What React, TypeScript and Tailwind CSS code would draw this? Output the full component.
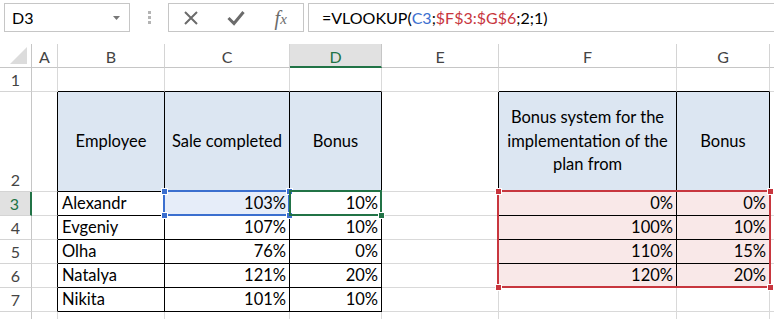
import React from "react";

type Cell = { text?: React.ReactNode; align?: "left" | "right" | "center" };

const colLetters = ["", "A", "B", "C", "D", "E", "F", "G", ""];

const data: Record<number, Record<number, Cell>> = {
  2: {
    2: { text: "Employee", align: "center" },
    3: { text: "Sale completed", align: "center" },
    4: { text: "Bonus", align: "center" },
    6: {
      text: (
        <>
          Bonus system for the
          <br />
          implementation of the
          <br />
          plan from
        </>
      ),
      align: "center",
    },
    7: { text: "Bonus", align: "center" },
  },
  3: { 2: { text: "Alexandr" }, 3: { text: "103%", align: "right" }, 4: { text: "10%", align: "right" }, 6: { text: "0%", align: "right" }, 7: { text: "0%", align: "right" } },
  4: { 2: { text: "Evgeniy" }, 3: { text: "107%", align: "right" }, 4: { text: "10%", align: "right" }, 6: { text: "100%", align: "right" }, 7: { text: "10%", align: "right" } },
  5: { 2: { text: "Olha" }, 3: { text: "76%", align: "right" }, 4: { text: "0%", align: "right" }, 6: { text: "110%", align: "right" }, 7: { text: "15%", align: "right" } },
  6: { 2: { text: "Natalya" }, 3: { text: "121%", align: "right" }, 4: { text: "20%", align: "right" }, 6: { text: "120%", align: "right" }, 7: { text: "20%", align: "right" } },
  7: { 2: { text: "Nikita" }, 3: { text: "101%", align: "right" }, 4: { text: "10%", align: "right" } },
};

function inTable(c: number, r: number) {
  if (c >= 2 && c <= 4 && r >= 2 && r <= 7) return true;
  if (c >= 6 && c <= 7 && r >= 2 && r <= 6) return true;
  return false;
}

function Corner({ x, y, color }: { x: number; y: number; color: "blue" | "red" | "green" }) {
  const cls =
    color === "blue"
      ? "absolute w-[7px] h-[7px] bg-[#3b6fcf] border border-white"
      : color === "red"
      ? "absolute w-[7px] h-[7px] bg-[#c8363e] border border-white"
      : "absolute w-[7px] h-[7px] bg-[#217346] border border-white";
  return <div className={cls} style={{ left: x - 3.5, top: y - 3.5 }} />;
}

function FormulaBar() {
  return (
    <div className="h-[44px] flex items-start pt-[3px] pl-[4px] bg-white">
      <div className="w-[126px] h-[29px] border border-[#c6c6c6] flex items-center justify-between pl-[7px] pr-[9px] text-[16px] text-black">
        <span>D3</span>
        <svg width="7" height="4" viewBox="0 0 7 4">
          <path d="M0 0 L7 0 L3.5 4 Z" fill="#777" />
        </svg>
      </div>
      <div className="w-[38px] h-[29px] flex flex-col items-center justify-center gap-[2px]">
        <div className="w-[3px] h-[3px] bg-[#b4b4b4]" />
        <div className="w-[3px] h-[3px] bg-[#b4b4b4]" />
        <div className="w-[3px] h-[3px] bg-[#b4b4b4]" />
      </div>
      <div className="w-[136px] h-[29px] border border-[#c6c6c6] flex">
        <div className="flex-1 flex items-center justify-center">
          <svg width="16" height="16" viewBox="0 0 16 16">
            <path d="M2 2 L14 14 M14 2 L2 14" stroke="#6b6b6b" strokeWidth="2" />
          </svg>
        </div>
        <div className="flex-1 flex items-center justify-center">
          <svg width="18" height="16" viewBox="0 0 18 16">
            <path d="M1.5 8 L7 13.5 L16.5 2" stroke="#6b6b6b" strokeWidth="3" fill="none" />
          </svg>
        </div>
        <div className="flex-1 flex items-center justify-center font-['Liberation_Serif',serif] italic text-[#6b6b6b]">
          <span className="text-[20px] leading-none">f</span>
          <span className="text-[15px] leading-none mt-[4px]">x</span>
        </div>
      </div>
      <div className="flex-1 ml-[4px] h-[29px] border border-r-0 border-[#c6c6c6] flex items-center pl-[13px] text-[16px] text-black">
        <span>=VLOOKUP(</span>
        <span className="text-[#3b6fcf]">C3</span>
        <span>;</span>
        <span className="text-[#c8363e]">$F$3:$G$6</span>
        <span>;2;1)</span>
      </div>
    </div>
  );
}

export default function App() {
  const rows = [0, 1, 2, 3, 4, 5, 6, 7, 8];
  const cols = [0, 1, 2, 3, 4, 5, 6, 7, 8];

  const cells: React.ReactNode[] = [];
  for (const r of rows) {
    for (const c of cols) {
      const key = `${r}-${c}`;
      if (r === 0 && c === 0) {
        cells.push(
          <div key={key} className="border-r border-b border-r-[#c6c6c6] border-b-[#c6c6c6] bg-white relative">
            <svg className="absolute left-[10px] top-[3px]" width="18" height="18" viewBox="0 0 18 18">
              <path d="M17 0 L17 17 L0 17 Z" fill="#dcdcdc" />
            </svg>
          </div>
        );
        continue;
      }
      if (r === 0) {
        const sel = c === 4;
        cells.push(
          <div
            key={key}
            className={
              sel
                ? "border-r border-b-2 border-r-[#c6c6c6] border-b-[#217346] bg-[#e1e1e1] text-[#217346] flex items-center justify-center pt-[3px] text-[16px]"
                : "border-r border-b border-r-[#d4d4d4] border-b-[#c6c6c6] bg-white text-[#444] flex items-center justify-center pt-[2px] text-[16px]"
            }
          >
            {colLetters[c]}
          </div>
        );
        continue;
      }
      if (c === 0) {
        const sel = r === 3;
        cells.push(
          <div
            key={key}
            className={
              sel
                ? "border-r-2 border-b border-r-[#217346] border-b-[#d4d4d4] bg-[#e1e1e1] text-[#217346] flex items-end justify-center pr-[1px] text-[16px] leading-[23px]"
                : "border-r border-b border-r-[#c6c6c6] border-b-[#d4d4d4] bg-white text-[#444] flex items-end justify-center text-[16px] leading-[23px]"
            }
          >
            {r === 8 ? <span className="relative top-[10px]">{r}</span> : r}
          </div>
        );
        continue;
      }
      const blackR = inTable(c, r) || inTable(c + 1, r);
      const blackB = inTable(c, r) || inTable(c, r + 1);
      const cell = data[r]?.[c];
      const isHeader = r === 2 && inTable(c, r);
      const isPink = c >= 6 && c <= 7 && r >= 3 && r <= 6;
      const isBlue = c === 3 && r === 3;
      const bg = isHeader ? "bg-[#dce6f2]" : isPink ? "bg-[#f9e8e8]" : isBlue ? "bg-[#e6edf9]" : "bg-white";
      const rc = blackR ? "border-r-black" : "border-r-[#d9d9d9]";
      const bc = blackB ? "border-b-black" : "border-b-[#d9d9d9]";
      const align =
        cell?.align === "right"
          ? "justify-end text-right pr-[3px]"
          : cell?.align === "center"
          ? "justify-center text-center"
          : "justify-start text-left pl-[4px]";
      cells.push(
        <div key={key} className={`border-r border-b ${rc} ${bc} ${bg} ${align} flex items-center text-[16.5px] text-black leading-[23.5px] whitespace-nowrap overflow-visible`}>
          {cell?.text}
        </div>
      );
    }
  }

  return (
    <div className="w-[774px] h-[319px] overflow-hidden bg-white font-['Lato',sans-serif]">
      <FormulaBar />
      <div className="relative grid grid-cols-[32px_26px_107px_125px_92px_117px_178px_93px_1fr] grid-rows-[24px_24px_100px_24px_24px_24px_24px_24px_24px]">
        {cells}
        {/* C3 reference highlight */}
        <div className="absolute left-[163px] top-[146px] w-[127px] h-[26px] border-2 border-[#3b6fcf]" />
        <Corner x={164} y={147} color="blue" />
        <Corner x={289} y={147} color="blue" />
        <Corner x={164} y={171} color="blue" />
        <Corner x={289} y={171} color="blue" />
        {/* D3 active cell */}
        <div className="absolute left-[289px] top-[146px] w-[93px] h-[26px] border-2 border-[#217346]" />
        <div className="absolute left-[378px] top-[168px] w-[7px] h-[7px] bg-[#217346] border border-white" />
        {/* F3:G6 reference highlight */}
        <div className="absolute left-[497px] top-[146px] w-[274px] h-[98px] border-2 border-[#c8363e]" />
        <Corner x={498} y={147} color="red" />
        <Corner x={770} y={147} color="red" />
        <Corner x={498} y={243} color="red" />
        <Corner x={770} y={243} color="red" />
      </div>
    </div>
  );
}
